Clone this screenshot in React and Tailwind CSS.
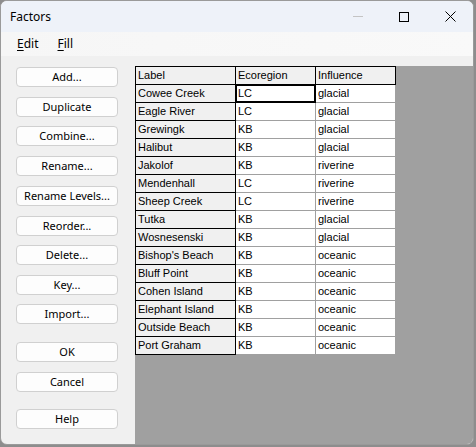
import React from "react";

const buttons = [
  { label: "Add...", mt: "mt-0" },
  { label: "Duplicate", mt: "mt-[10px]" },
  { label: "Combine...", mt: "mt-[9px]" },
  { label: "Rename...", mt: "mt-[10px]" },
  { label: "Rename Levels...", mt: "mt-[10px]" },
  { label: "Reorder...", mt: "mt-[10px]" },
  { label: "Delete...", mt: "mt-[9px]" },
  { label: "Key...", mt: "mt-[10px]" },
  { label: "Import...", mt: "mt-[9px]" },
  { label: "OK", mt: "mt-[18px]" },
  { label: "Cancel", mt: "mt-[10px]" },
  { label: "Help", mt: "mt-[17px]" },
];

const rows = [
  ["Cowee Creek", "LC", "glacial"],
  ["Eagle River", "LC", "glacial"],
  ["Grewingk", "KB", "glacial"],
  ["Halibut", "KB", "glacial"],
  ["Jakolof", "KB", "riverine"],
  ["Mendenhall", "LC", "riverine"],
  ["Sheep Creek", "LC", "riverine"],
  ["Tutka", "KB", "glacial"],
  ["Wosnesenski", "KB", "glacial"],
  ["Bishop's Beach", "KB", "oceanic"],
  ["Bluff Point", "KB", "oceanic"],
  ["Cohen Island", "KB", "oceanic"],
  ["Elephant Island", "KB", "oceanic"],
  ["Outside Beach", "KB", "oceanic"],
  ["Port Graham", "KB", "oceanic"],
];

const ui = { fontFamily: '"Noto Sans", sans-serif' };
const grid = { fontFamily: '"Liberation Sans", Arial, sans-serif' };

const headCell = "h-[18px] pl-[2px] bg-[#f0f0f0] border-r border-b border-black leading-[16px] text-[11px] text-black";
const labelCell = "h-[18px] pl-[2px] bg-[#f0f0f0] border-r border-b border-black leading-[16px] text-[11px] text-black whitespace-nowrap overflow-hidden";
const dataCell = "h-[18px] pl-[2px] bg-white border-r border-b border-[#a0a0a0] leading-[16px] text-[11px] text-black";

export default function App() {
  return (
    <div className="w-[476px] h-[447px] bg-[#8d8d8d] overflow-hidden">
      <div className="w-[474px] h-[445px] rounded-[7px] overflow-hidden border border-[#9a9a9a] bg-[#f0f0f0] flex flex-col" style={ui}>
        {/* title bar */}
        <div className="h-[31px] bg-[#eef2f9] flex items-center shrink-0">
          <span className="ml-[9px] text-[12px] text-black">Factors</span>
          <div className="ml-auto flex items-center">
            <div className="w-[46px] h-[31px] flex items-center justify-center">
              <div className="w-[10px] h-px bg-[#c4c4c4]" />
            </div>
            <div className="w-[46px] h-[31px] flex items-center justify-center">
              <div className="w-[10px] h-[10px] border border-black" />
            </div>
            <div className="w-[46px] h-[31px] flex items-center justify-center">
              <svg width="11" height="11" viewBox="0 0 11 11">
                <path d="M0.5 0.5 L10.5 10.5 M10.5 0.5 L0.5 10.5" stroke="#000" strokeWidth="1" />
              </svg>
            </div>
          </div>
        </div>

        {/* menu bar */}
        <div className="h-[24px] bg-gradient-to-r from-[#f6f6f6] to-[#f9f9f9] flex items-center shrink-0 text-[12px] text-black">
          <span className="ml-[16px]"><span className="underline underline-offset-2">E</span>dit</span>
          <span className="ml-[19px]"><span className="underline underline-offset-2">F</span>ill</span>
        </div>

        {/* content */}
        <div className="flex-1 flex min-h-0">
          <div className="w-[134px] shrink-0 pt-[11px] pl-[15px] flex flex-col">
            {buttons.map((b) => (
              <button
                key={b.label}
                className={`${b.mt} w-[102px] h-[20px] bg-[#fdfdfd] border border-[#d0d0d0] rounded-[4px] text-[11px] leading-[18px] text-black text-center`}
              >
                {b.label}
              </button>
            ))}
          </div>

          <div className="flex-1 mt-[10px] bg-[#a0a0a0]" style={grid}>
            <div className="w-[261px] border-l border-t border-black grid grid-cols-[100px_80px_80px]">
              <div className={headCell}>Label</div>
              <div className={headCell}>Ecoregion</div>
              <div className={headCell}>Influence</div>
              {rows.map((r, i) => (
                <React.Fragment key={r[0]}>
                  <div className={labelCell}>{r[0]}</div>
                  <div className={`${dataCell} relative`}>
                    {r[1]}
                    {i === 0 && (
                      <div className="absolute -left-px -top-px w-[81px] h-[19px] border-2 border-black" />
                    )}
                  </div>
                  <div className={dataCell}>{r[2]}</div>
                </React.Fragment>
              ))}
            </div>
          </div>
        </div>
      </div>
    </div>
  );
}
